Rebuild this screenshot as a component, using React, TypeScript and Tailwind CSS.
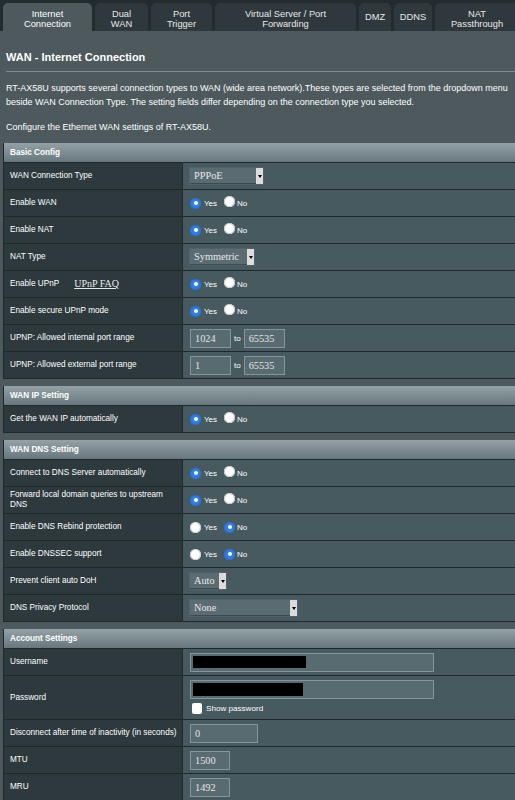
import React from "react";

const sans = "font-['Liberation_Sans',Arial,sans-serif]";
const serif = "font-['Liberation_Serif','Times_New_Roman',serif]";

function Tab({ w, lines, active }: { w: string; lines: string[]; active?: boolean }) {
  return (
    <div
      className={`${w} shrink-0 h-full rounded-t-[5px] flex items-center justify-center text-center text-[9.3px] leading-[10px] ${
        active ? "bg-[#4d595d] text-white" : "bg-[#2f393d] text-[#e8e8e8]"
      } ${lines.length > 1 ? "pt-[3px]" : ""}`}
    >
      <div>
        {lines.map((l, i) => (
          <div key={i}>{l}</div>
        ))}
      </div>
    </div>
  );
}

function Radio({ checked }: { checked?: boolean }) {
  return checked ? (
    <span className="inline-flex w-[11px] h-[11px] rounded-full bg-[#2f7ee6] items-center justify-center shadow-[inset_0_0_0_1px_#2a6fd0]">
      <span className="w-[4px] h-[4px] rounded-full bg-white" />
    </span>
  ) : (
    <span className="inline-block w-[11px] h-[11px] rounded-full bg-white shadow-[inset_0_0_0_1px_#c8c8c8]" />
  );
}

function YesNo({ yes }: { yes: boolean }) {
  return (
    <div className="flex items-center text-[8px] text-white">
      <Radio checked={yes} />
      <span className="ml-[3px] translate-y-[1px]">Yes</span>
      <span className="ml-[7px]">
        <Radio checked={!yes} />
      </span>
      <span className="ml-[2px] translate-y-[1px]">No</span>
    </div>
  );
}

function Select({ value, w }: { value: string; w: string }) {
  return (
    <div className={`${w} h-[16px] flex bg-[#5a6c72] border-b border-[#3c4a4e] shadow-[0_0_0_1px_#526268]`}>
      <div className={`flex-1 ${serif} text-[10.3px] text-[#e8e8e8] pl-[4px] leading-[16px] whitespace-nowrap overflow-hidden`}>
        {value}
      </div>
      <div className="w-[7px] h-[16px] bg-[#dcdcdc] flex items-center justify-center">
        <svg width="4" height="3" viewBox="0 0 4 3">
          <path d="M0 0 L4 0 L2 3 Z" fill="#000" />
        </svg>
      </div>
    </div>
  );
}

function Input({ value, w, children }: { value?: string; w: string; children?: React.ReactNode }) {
  return (
    <div
      className={`${w} h-[19px] relative bg-[#576b71] border border-[#84969b] ${serif} text-[10.3px] text-[#e4e4e4] leading-[17px] pl-[4px]`}
    >
      {value}
      {children}
    </div>
  );
}

function Row({ label, children, h = "h-[27px]" }: { label: React.ReactNode; children: React.ReactNode; h?: string }) {
  return (
    <div className={`flex border-t border-[#20282b] ${h}`}>
      <div className="w-[179px] shrink-0 bg-[#2e393d] border-r border-[#20282b] pl-[6px] pr-[3px] flex items-center text-[8.2px] leading-[10px] text-white">
        {label}
      </div>
      <div className="flex-1 bg-[#475a5f] pl-[7px] flex items-center">{children}</div>
    </div>
  );
}

function Section({ title, children }: { title: string; children: React.ReactNode }) {
  return (
    <div className="ml-[3px] w-[520px] border-l border-b border-[#20282b] mb-[7px]">
      <div className="h-[19px] bg-[linear-gradient(#94a2a7,#68777e)] pl-[6px] pt-[2px] flex items-center text-[8.2px] font-bold text-white">
        {title}
      </div>
      {children}
    </div>
  );
}

function PortRange({ a, b }: { a: string; b: string }) {
  return (
    <div className="flex items-center">
      <Input w="w-[41px]" value={a} />
      <span className="text-[8px] text-white mx-[3px] translate-y-[1px]">to</span>
      <Input w="w-[41px]" value={b} />
    </div>
  );
}

export default function App() {
  return (
    <div className={`w-[515px] h-[800px] overflow-hidden bg-[#4d595d] ${sans}`}>
      <div className="h-[31px] bg-[#222b2e] pt-[3px] pl-[3px] flex gap-[3px] overflow-hidden">
        <Tab w="w-[89px]" lines={["Internet", "Connection"]} active />
        <Tab w="w-[53px]" lines={["Dual", "WAN"]} />
        <Tab w="w-[61px]" lines={["Port", "Trigger"]} />
        <Tab w="w-[141px]" lines={["Virtual Server / Port", "Forwarding"]} />
        <Tab w="w-[32px]" lines={["DMZ"]} />
        <Tab w="w-[38px]" lines={["DDNS"]} />
        <Tab w="w-[84px]" lines={["NAT", "Passthrough"]} />
      </div>

      <div className="pl-[6px]">
        <div className="mt-[19px] text-[11px] leading-[14px] font-bold text-white">WAN - Internet Connection</div>
        <div className="mt-[7px] h-px bg-[#7f8b8f]" />
        <div className="mt-[9px] w-[503px] text-[9px] leading-[14px] text-white">
          RT-AX58U supports several connection types to WAN (wide area network).These types are selected from the
          dropdown menu beside WAN Connection Type. The setting fields differ depending on the connection type you
          selected.
        </div>
        <div className="mt-[11px] text-[9px] leading-[14px] text-white">Configure the Ethernet WAN settings of RT-AX58U.</div>
      </div>

      <div className="mt-[9px]">
        <Section title="Basic Config">
          <Row label="WAN Connection Type">
            <Select w="w-[73px]" value="PPPoE" />
          </Row>
          <Row label="Enable WAN">
            <YesNo yes />
          </Row>
          <Row label="Enable NAT">
            <YesNo yes />
          </Row>
          <Row label="NAT Type">
            <Select w="w-[64px]" value="Symmetric" />
          </Row>
          <Row
            label={
              <>
                <span>Enable UPnP</span>
                <span className={`ml-[15px] ${serif} text-[10px] underline text-[#e8e8e8]`}>UPnP FAQ</span>
              </>
            }
          >
            <YesNo yes />
          </Row>
          <Row label="Enable secure UPnP mode">
            <YesNo yes />
          </Row>
          <Row label="UPNP: Allowed internal port range">
            <PortRange a="1024" b="65535" />
          </Row>
          <Row label="UPNP: Allowed external port range">
            <PortRange a="1" b="65535" />
          </Row>
        </Section>

        <Section title="WAN IP Setting">
          <Row label="Get the WAN IP automatically">
            <YesNo yes />
          </Row>
        </Section>

        <Section title="WAN DNS Setting">
          <Row label="Connect to DNS Server automatically">
            <YesNo yes />
          </Row>
          <Row label="Forward local domain queries to upstream DNS">
            <YesNo yes />
          </Row>
          <Row label="Enable DNS Rebind protection">
            <YesNo yes={false} />
          </Row>
          <Row label="Enable DNSSEC support">
            <YesNo yes={false} />
          </Row>
          <Row label="Prevent client auto DoH">
            <Select w="w-[36px]" value="Auto" />
          </Row>
          <Row label="DNS Privacy Protocol">
            <Select w="w-[107px]" value="None" />
          </Row>
        </Section>

        <Section title="Account Settings">
          <Row label="Username">
            <Input w="w-[244px]">
              <div className="absolute left-[2px] top-[2px] w-[113px] h-[12px] bg-black" />
            </Input>
          </Row>
          <Row label="Password" h="h-[44px]">
            <div className="flex flex-col">
              <Input w="w-[244px]">
                <div className="absolute left-[2px] top-[2px] w-[110px] h-[13px] bg-black" />
              </Input>
              <div className="flex items-center mt-[3px] ml-[2px]">
                <span className="w-[10px] h-[11px] rounded-[2px] bg-white inline-block" />
                <span className="ml-[4px] text-[8.1px] text-white translate-y-[1px]">Show password</span>
              </div>
            </div>
          </Row>
          <Row label={<span className="whitespace-nowrap">Disconnect after time of inactivity (in seconds)</span>}>
            <Input w="w-[68px]" value="0" />
          </Row>
          <Row label="MTU">
            <Input w="w-[40px]" value="1500" />
          </Row>
          <Row label="MRU">
            <Input w="w-[40px]" value="1492" />
          </Row>
        </Section>
      </div>
    </div>
  );
}
